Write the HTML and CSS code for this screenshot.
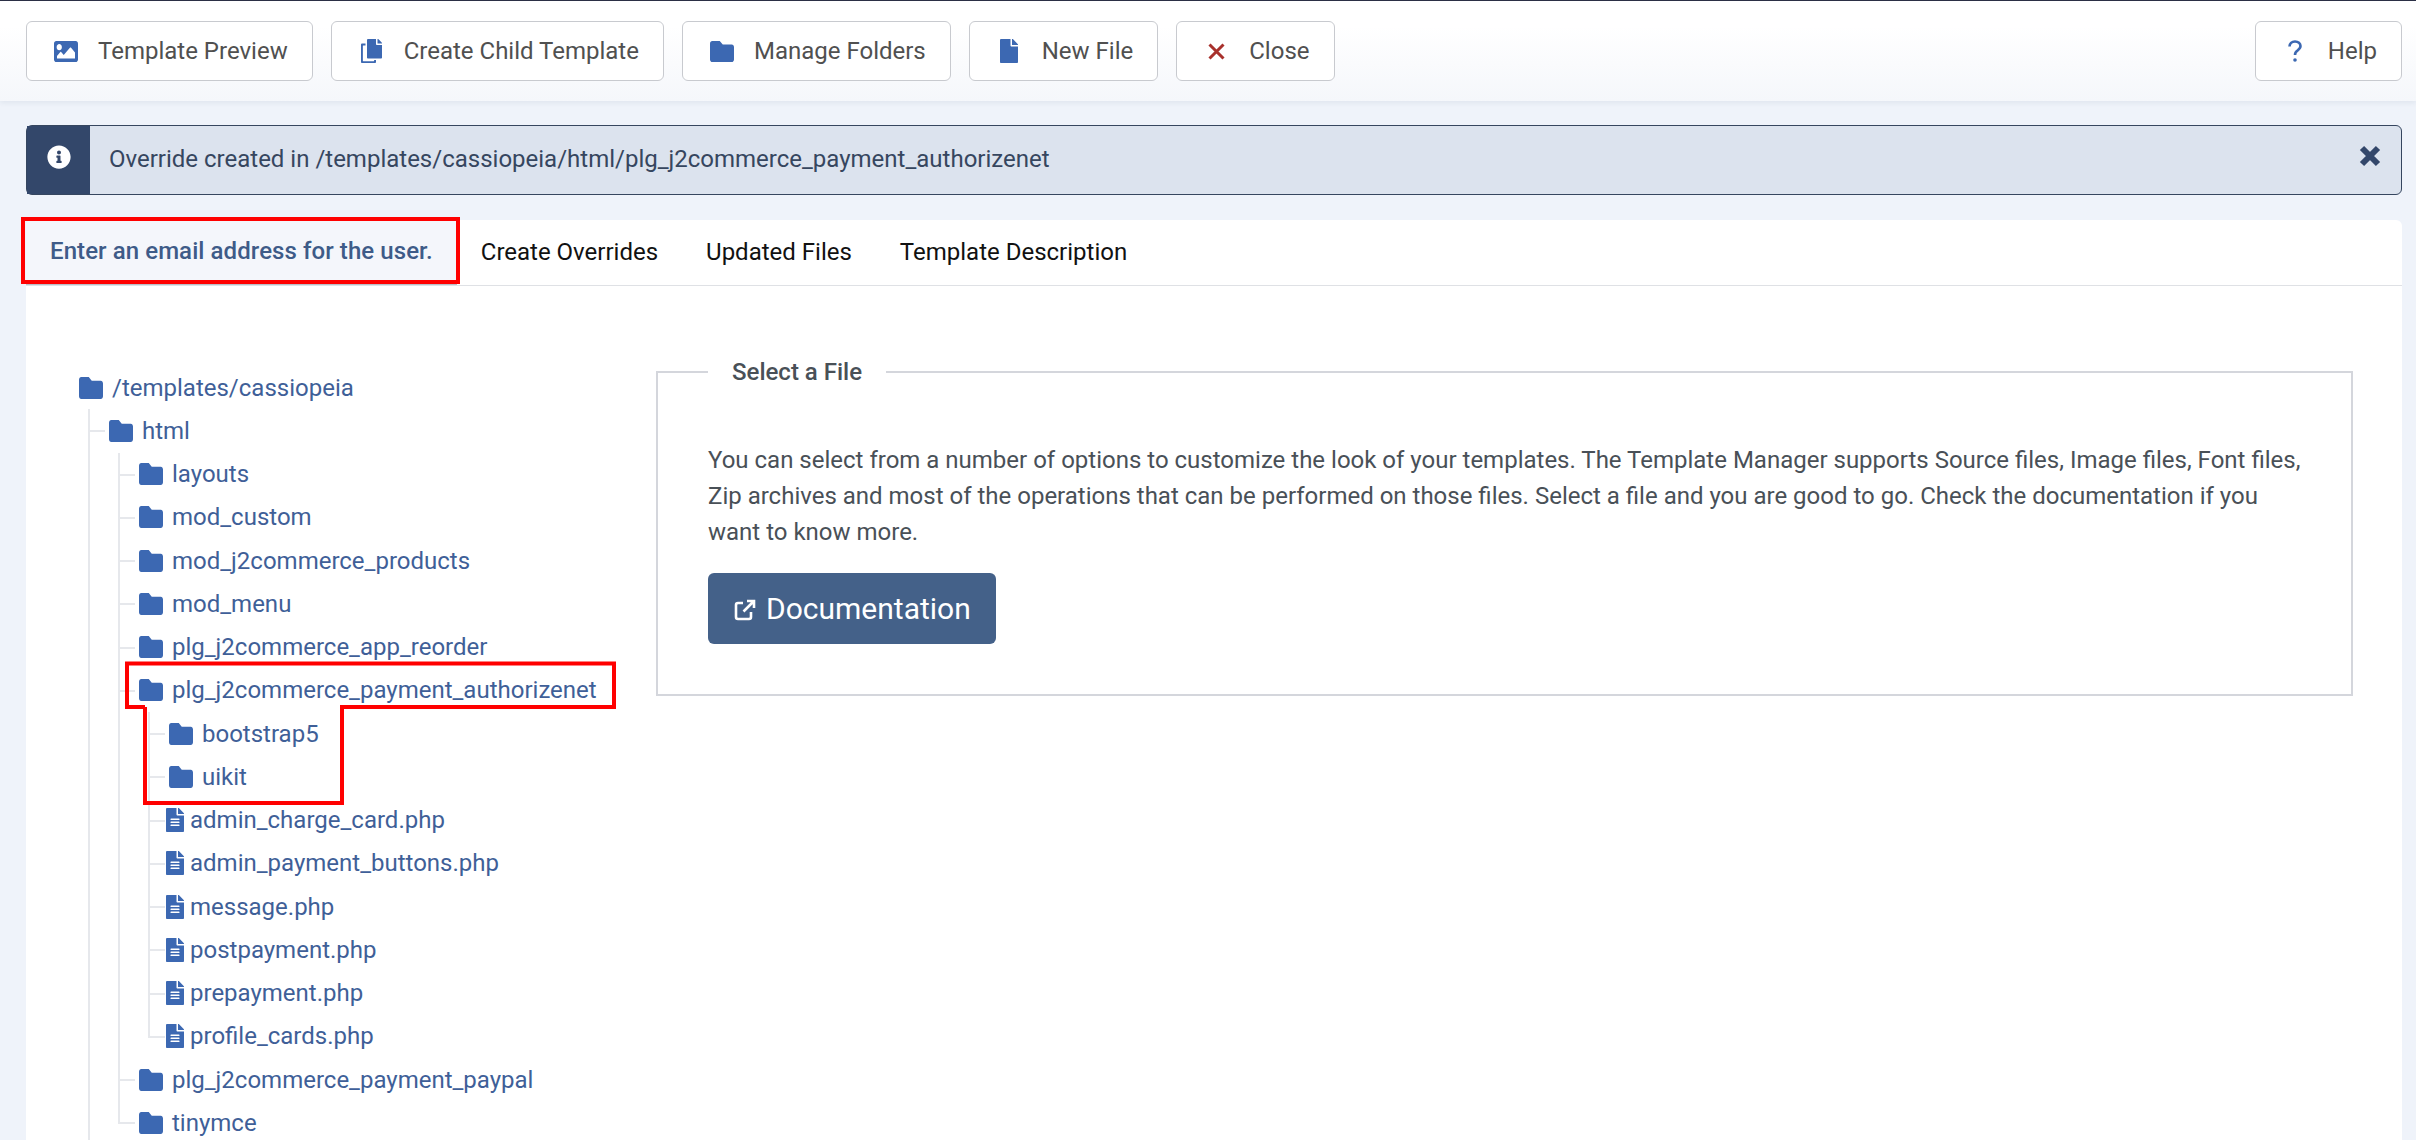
FILE: index.html
```html
<!DOCTYPE html>
<html lang="en">
<head>
    <meta charset="UTF-8">
    <meta name="viewport" content="width=device-width, initial-scale=1.0">
    <title>Templates: Customise (Cassiopeia)</title>
    <link rel="stylesheet" href="styles.css">
</head>
<body>
    <svg width="0" height="0" class="defs">
        <symbol id="i-folder" viewBox="0 64 512 384" preserveAspectRatio="none"><path d="M464 128H272l-64-64H48C21.49 64 0 85.49 0 112v288c0 26.51 21.49 48 48 48h416c26.51 0 48-21.49 48-48V176c0-26.51-21.49-48-48-48z"/></symbol>
        <symbol id="i-file-alt" viewBox="0 0 384 512" preserveAspectRatio="none"><path d="M224 136V0H24C10.7 0 0 10.7 0 24v464c0 13.3 10.7 24 24 24h336c13.3 0 24-10.7 24-24V160H248c-13.2 0-24-10.8-24-24zm64 236c0 6.6-5.4 12-12 12H108c-6.6 0-12-5.4-12-12v-8c0-6.6 5.4-12 12-12h168c6.6 0 12 5.4 12 12v8zm0-64c0 6.6-5.4 12-12 12H108c-6.6 0-12-5.4-12-12v-8c0-6.6 5.4-12 12-12h168c6.6 0 12 5.4 12 12v8zm0-72v8c0 6.6-5.4 12-12 12H108c-6.6 0-12-5.4-12-12v-8c0-6.6 5.4-12 12-12h168c6.6 0 12 5.4 12 12zm96-114.1v6.1H256V0h6.1c6.4 0 12.5 2.5 17 7l97.9 98c4.5 4.5 7 10.6 7 16.9z"/></symbol>
    </svg>

    <div class="toolbar">
        <a class="tool-btn"><svg class="ico ico-image" viewBox="0 64 512 384" preserveAspectRatio="none"><path d="M464 448H48c-26.51 0-48-21.49-48-48V112c0-26.51 21.49-48 48-48h416c26.51 0 48 21.49 48 48v288c0 26.51-21.49 48-48 48zM112 120c-30.928 0-56 25.072-56 56s25.072 56 56 56 56-25.072 56-56-25.072-56-56-56zM64 384h384V272l-87.515-87.515c-4.686-4.686-12.284-4.686-16.971 0L208 320l-55.515-55.515c-4.686-4.686-12.284-4.686-16.971 0L64 336v48z"/></svg>Template Preview</a>
        <a class="tool-btn"><svg class="ico ico-copy" viewBox="0 0 448 512"><path d="M320 448v40c0 13.255-10.745 24-24 24H24c-13.255 0-24-10.745-24-24V120c0-13.255 10.745-24 24-24h72v40H48a8 8 0 0 0-8 8v320a8 8 0 0 0 8 8h224a8 8 0 0 0 8-8v-16zm0-344V0H152c-13.255 0-24 10.745-24 24v368c0 13.255 10.745 24 24 24h272c13.255 0 24-10.745 24-24V128H344c-13.2 0-24-10.8-24-24zm120.971-31.029L375.029 7.029A24 24 0 0 0 358.059 0H352v96h96v-6.059a24 24 0 0 0-7.029-16.97z"/></svg>Create Child Template</a>
        <a class="tool-btn"><svg class="ico ico-image"><use href="#i-folder"/></svg>Manage Folders</a>
        <a class="tool-btn"><svg class="ico ico-file" viewBox="0 0 384 512" preserveAspectRatio="none"><path d="M224 136V0H24C10.7 0 0 10.7 0 24v464c0 13.3 10.7 24 24 24h336c13.3 0 24-10.7 24-24V160H248c-13.2 0-24-10.8-24-24zm160-14.1v6.1H256V0h6.1c6.4 0 12.5 2.5 17 7l97.9 98c4.5 4.5 7 10.6 7 16.9z"/></svg>New File</a>
        <a class="tool-btn"><svg class="ico ico-x" viewBox="0 0 17 17"><path d="M1.500 1.500l14 14M15.500 1.500l-14 14"/></svg>Close</a>
        <a class="tool-btn tool-help"><svg class="ico ico-help" viewBox="0 0 14 22"><path d="M1.500 6.500C1.500 3.500 3.800 1.500 7 1.500s5.500 2 5.500 4.600c0 2-1 3-2.800 4.200C7.800 11.500 7 12.500 7 15"/><circle cx="7" cy="20" r="1.800"/></svg>Help</a>
    </div>

    <main class="main">
        <div class="alert">
            <div class="alert-icon">
                <svg viewBox="0 0 512 512"><path d="M256 8C119.043 8 8 119.083 8 256c0 136.997 111.043 248 248 248s248-111.003 248-248C504 119.083 392.957 8 256 8zm0 110c23.196 0 42 18.804 42 42s-18.804 42-42 42-42-18.804-42-42 18.804-42 42-42zm56 254c0 6.627-5.373 12-12 12h-88c-6.627 0-12-5.373-12-12v-24c0-6.627 5.373-12 12-12h12v-64h-12c-6.627 0-12-5.373-12-12v-24c0-6.627 5.373-12 12-12h64c6.627 0 12 5.373 12 12v100h12c6.627 0 12 5.373 12 12v24z"/></svg>
            </div>
            <div class="alert-text">Override created in /templates/cassiopeia/html/plg_j2commerce_payment_authorizenet</div>
            <svg class="alert-close" viewBox="0 0 22 22"><path d="M3 3l16 16M19 3L3 19"/></svg>
        </div>

        <div class="card">
            <div class="tabs">
                <a class="tab active">Enter an email address for the user.</a>
                <a class="tab">Create Overrides</a>
                <a class="tab">Updated Files</a>
                <a class="tab">Template Description</a>
            </div>
            <div class="card-body">
                <ul class="tree tree-root">
                    <li>
                        <span class="node"><svg class="folder"><use href="#i-folder"/></svg>/templates/cassiopeia</span>
                        <ul class="tree">
                            <li class="runs-on">
                                <span class="node"><svg class="folder"><use href="#i-folder"/></svg>html</span>
                                <ul class="tree">
                                    <li><span class="node"><svg class="folder"><use href="#i-folder"/></svg>layouts</span></li>
                                    <li><span class="node"><svg class="folder"><use href="#i-folder"/></svg>mod_custom</span></li>
                                    <li><span class="node"><svg class="folder"><use href="#i-folder"/></svg>mod_j2commerce_products</span></li>
                                    <li><span class="node"><svg class="folder"><use href="#i-folder"/></svg>mod_menu</span></li>
                                    <li><span class="node"><svg class="folder"><use href="#i-folder"/></svg>plg_j2commerce_app_reorder</span></li>
                                    <li>
                                        <span class="node"><svg class="folder"><use href="#i-folder"/></svg>plg_j2commerce_payment_authorizenet</span>
                                        <ul class="tree">
                                            <li><span class="node"><svg class="folder"><use href="#i-folder"/></svg>bootstrap5</span></li>
                                            <li><span class="node"><svg class="folder"><use href="#i-folder"/></svg>uikit</span></li>
                                            <li><span class="node file"><svg class="doc"><use href="#i-file-alt"/></svg>admin_charge_card.php</span></li>
                                            <li><span class="node file"><svg class="doc"><use href="#i-file-alt"/></svg>admin_payment_buttons.php</span></li>
                                            <li><span class="node file"><svg class="doc"><use href="#i-file-alt"/></svg>message.php</span></li>
                                            <li><span class="node file"><svg class="doc"><use href="#i-file-alt"/></svg>postpayment.php</span></li>
                                            <li><span class="node file"><svg class="doc"><use href="#i-file-alt"/></svg>prepayment.php</span></li>
                                            <li><span class="node file"><svg class="doc"><use href="#i-file-alt"/></svg>profile_cards.php</span></li>
                                        </ul>
                                    </li>
                                    <li><span class="node"><svg class="folder"><use href="#i-folder"/></svg>plg_j2commerce_payment_paypal</span></li>
                                    <li><span class="node"><svg class="folder"><use href="#i-folder"/></svg>tinymce</span></li>
                                </ul>
                            </li>
                        </ul>
                    </li>
                </ul>

                <fieldset class="select-file">
                    <legend>Select a File</legend>
                    <p>You can select from a number of options to customize the look of your templates. The Template Manager supports Source files, Image files, Font files, Zip archives and most of the operations that can be performed on those files. Select a file and you are good to go. Check the documentation if you want to know more.</p>
                    <a class="doc-btn"><svg viewBox="0 0 22 22"><path d="M9 4H4a2 2 0 0 0-2 2v12a2 2 0 0 0 2 2h11a2 2 0 0 0 2-2v-5M13 2h7v7M20 2L9.500 12.500"/></svg>Documentation</a>
                </fieldset>
            </div>
        </div>
    </main>

    <!-- red annotation marks drawn on top of the screenshot -->
    <svg class="marks" viewBox="0 0 2416 1140">
        <rect x="23" y="219" width="435" height="63"/>
        <path d="M145 707H127V663.500H614V707H342V803H145V707"/>
    </svg>
</body>
</html>
```

FILE: styles.css
```css
html, body {
    margin: 0;
    height: 100%;
}
body {
    height: 1140px;
    overflow: hidden;
    position: relative;
    background: #eff3fa;
    font-family: Roboto, "Liberation Sans", sans-serif;
    font-size: 24px;
    color: #495057;
}
.defs {
    position: absolute;
}

/* toolbar */
.toolbar {
    display: flex;
    gap: 18px;
    height: 101px;
    box-sizing: border-box;
    padding: 20px 14px 0 26px;
    border-top: 1px solid #2b2f45;
    background: linear-gradient(#fff 25%, #f5f7fb);
    box-shadow: 0 2px 5px rgba(30, 50, 90, .07);
}
.tool-btn {
    display: flex;
    align-items: center;
    box-sizing: border-box;
    height: 60px;
    padding: 0 24px;
    border: 1px solid #c8cacf;
    border-radius: 6px;
    background: #fff;
    color: #505050;
    white-space: nowrap;
}
.tool-help {
    margin-left: auto;
}
.ico {
    flex: none;
    fill: #3c68b2;
}
.ico-image {
    width: 24px;
    height: 21px;
    margin: 0 20px 0 3px;
}
.ico-copy {
    width: 21px;
    height: 24px;
    margin: 0 22px 0 5px;
}
.ico-file {
    width: 18px;
    height: 24px;
    margin: 0 24px 0 6px;
}
.ico-x {
    width: 17px;
    height: 17px;
    margin: 0 24px 0 7px;
    fill: none;
    stroke: #a8312c;
    stroke-width: 3;
}
.ico-help {
    width: 14px;
    height: 22px;
    margin: 0 26px 0 8px;
}
.ico-help path {
    fill: none;
    stroke: #3c68b2;
    stroke-width: 2.6;
}

.main {
    padding: 24px 14px 0 26px;
}

/* alert */
.alert {
    display: flex;
    align-items: center;
    box-sizing: border-box;
    height: 70px;
    border: 1.5px solid #36465f;
    border-radius: 6px;
    background: #dce3ee;
    color: #36465f;
    position: relative;
}
.alert-icon {
    align-self: stretch;
    flex: none;
    display: flex;
    justify-content: center;
    padding-top: 19px;
    box-sizing: border-box;
    width: 63px;
    background: #33476a;
}
.alert-icon svg {
    width: 24px;
    height: 24px;
    fill: #fff;
}
.alert-text {
    flex: 1;
    padding-left: 19px;
    padding-bottom: 3px;
}
.alert-close {
    width: 22px;
    height: 22px;
    margin: -8px 20px 0 0;
    fill: none;
    stroke: #33476a;
    stroke-width: 6;
}

/* tabs + card */
.card {
    margin-top: 25px;
    border-radius: 6px 6px 0 0;
    background: #fff;
    height: 920px;
    overflow: hidden;
}
.tabs {
    display: flex;
    height: 66px;
    box-sizing: border-box;
    border-bottom: 1px solid #dfe1e5;
}
.tab {
    display: flex;
    align-items: center;
    padding: 0 24px 2px;
    color: #111;
}
.tab.active {
    background: #f4f6fb;
    border-bottom: 2px solid #b9bec8;
    font-weight: 500;
    letter-spacing: .08px;
    color: #3e5b88;
}
.card-body {
    display: grid;
    grid-template-columns: 578px 1fr;
    padding: 72px 49px 0 53px;
}

/* file tree */
.tree {
    list-style: none;
    margin: 0 0 0 9px;
    padding: 0;
    color: #3f5f98;
}
.tree-root {
    margin: 8px 0 0;
}
.tree li {
    position: relative;
    padding-left: 21px;
}
.tree-root > li {
    padding-left: 0;
}
.tree .tree li::before {
    content: "";
    position: absolute;
    left: 0;
    top: 0;
    width: 15px;
    height: 21px;
    border-left: 2px solid #e6e8ec;
    border-bottom: 2px solid #e6e8ec;
}
.tree .tree li:not(:last-child)::after,
.tree .tree li.runs-on::after {
    content: "";
    position: absolute;
    left: 0;
    top: 0;
    bottom: 0;
    border-left: 2px solid #e6e8ec;
}
.node {
    display: flex;
    align-items: center;
    height: 43.25px;
    white-space: nowrap;
}
.folder {
    flex: none;
    width: 24px;
    height: 22px;
    margin-right: 9px;
    fill: #3c68b2;
}
.doc {
    flex: none;
    width: 18px;
    height: 24px;
    margin: 0 6px 0 -3px;
    fill: #3c68b2;
}

/* select a file */
.select-file {
    align-self: start;
    margin: 0 0 0 -1px;
    min-width: 0;
    padding: 55.5px 49px 48px 50px;
    height: 338px;
    box-sizing: border-box;
    border: 2px solid #d4d6dc;
}
.select-file legend {
    margin-left: 0;
    padding: 0 24px;
    font-weight: 500;
    color: #495057;
}
.select-file p {
    margin: 0 0 23px;
    line-height: 36px;
}
.doc-btn {
    display: inline-flex;
    align-items: center;
    height: 71px;
    box-sizing: border-box;
    padding: 0 25px 0 26px;
    border-radius: 6px;
    background: #446189;
    color: #fff;
    font-size: 30px;
}
.doc-btn svg {
    width: 22px;
    height: 22px;
    margin: 3px 10px 0 0;
    fill: none;
    stroke: #fff;
    stroke-width: 2.6;
}

/* annotation overlay */
.marks {
    position: absolute;
    left: 0;
    top: 0;
    width: 2416px;
    height: 1140px;
    fill: none;
    stroke: #f00;
    stroke-width: 4;
    pointer-events: none;
}
```
